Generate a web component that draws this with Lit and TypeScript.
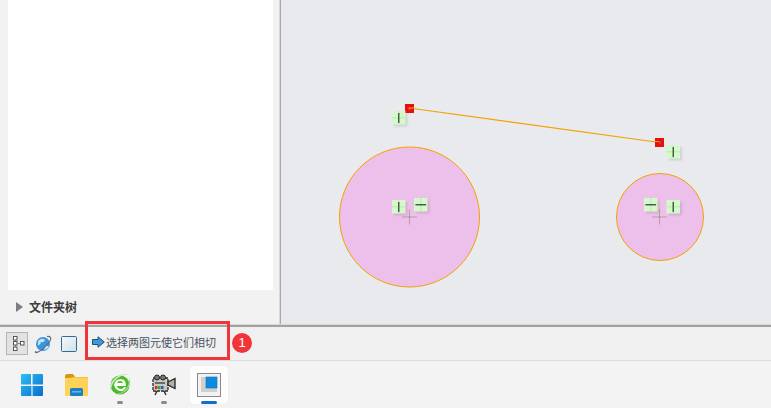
import { LitElement, html, css, svg } from "lit";
import { customElement } from "lit/decorators.js";

const tag = (x: number, y: number, vertical: boolean) => svg`
  <g transform="translate(${x} ${y})">
    <rect x="2" y="2" width="13.5" height="13.5" fill="#000" opacity=".1" filter="url(#soft)"/>
    <rect width="13.5" height="13.5" fill="#d4f9ca"/>
    <path d="M6.75 0v13.5M0 6.75h13.5" stroke="#c6ecbd" stroke-width="1.4"/>
    ${vertical
      ? svg`<path d="M6.75 2v10" stroke="#3d4a3e" stroke-width="1.3"/>`
      : svg`<path d="M1.500 6.75h10.500" stroke="#3d4a3e" stroke-width="1.3"/>`}
  </g>`;

const cross = (x: number, y: number) => svg`
  <path d="M${x} ${y - 7.5}v15M${x - 7.5} ${y}h15" stroke="#c59a9c" stroke-width="1"/>
  <rect x="${x - 1}" y="${y - 1}" width="2" height="2" fill="#8fa5c8"/>`;

@customElement("app-root")
export class AppRoot extends LitElement {
  static styles = css`
    :host {
      display: block;
      position: relative;
      width: 771px;
      height: 408px;
      overflow: hidden;
      background: #f3f3f3;
      font-family: "Noto Sans CJK SC", "Noto Sans", sans-serif;
    }
    .main {
      display: flex;
      height: 324px;
    }
    .side {
      width: 279px;
      flex: none;
      display: flex;
      flex-direction: column;
      padding-left: 8px;
      box-sizing: border-box;
      background: #f2f2f2;
    }
    .tree {
      width: 265px;
      height: 290px;
      flex: none;
      background: #fff;
    }
    .folder {
      display: flex;
      align-items: center;
      gap: 6px;
      height: 34px;
      padding-left: 8px;
      font-size: 12px;
      font-weight: 700;
      line-height: 16px;
      color: #3c3c3c;
    }
    .tri {
      width: 0;
      height: 0;
      border-left: 7px solid #7d7d7d;
      border-top: 5px solid transparent;
      border-bottom: 5px solid transparent;
    }
    .vline {
      flex: none;
      width: 1px;
      background: #a9a9a9;
      border-left: 1px solid #d8d8d8;
    }
    .canvas {
      flex: 1;
      background: #e8eaee;
    }
    .canvas svg { display: block; }
    .hline {
      height: 3px;
      background: linear-gradient(#d8d8d8 0 1px, #a2a2a2 1px);
    }
    .status {
      height: 33px;
      display: flex;
      align-items: center;
      padding-left: 6px;
      background: #f0f0f0;
      border-bottom: 1px solid #dcdcdc;
    }
    .tool {
      width: 22px;
      height: 23px;
      box-sizing: border-box;
      display: flex;
      align-items: center;
      justify-content: center;
      flex: none;
    }
    .tool.on {
      padding-left: 4px;
      background: #e2e2e2;
      border: 1px solid #b4b4b4;
    }
    .tools {
      display: flex;
      gap: 4px;
    }
    .sep {
      width: 1px;
      height: 24px;
      margin-left: 7px;
      background: #a8a8a8;
    }
    .msg {
      display: flex;
      align-items: center;
      gap: 1px;
      margin: 0 0 3px 4px;
      font-size: 11px;
      line-height: 14px;
      color: #47525e;
    }
    .taskbar {
      height: 47px;
      display: flex;
      align-items: center;
      padding-left: 12px;
      gap: 4px;
      background: #f3f3f3;
    }
    .app {
      position: relative;
      width: 40px;
      height: 40px;
      display: flex;
      align-items: center;
      justify-content: center;
      flex: none;
    }
    .app.active {
      width: 38px;
      height: 38px;
      margin-left: 2px;
      background: #fdfdfd;
      border-radius: 4px;
      box-shadow: 0 0 1px #d0d0d0;
    }
    .dot {
      position: absolute;
      left: 50%;
      bottom: 1px;
      width: 6px;
      height: 3px;
      margin-left: -3px;
      border-radius: 2px;
      background: #8a8a8a;
    }
    .bar {
      position: absolute;
      left: 11px;
      bottom: 0;
      width: 16px;
      height: 3px;
      border-radius: 2px;
      background: #0f6fd0;
    }
    .note {
      position: absolute;
      left: 85px;
      top: 321px;
      width: 145px;
      height: 39px;
      box-sizing: border-box;
      border: 3px solid #f0353a;
    }
    .badge {
      position: absolute;
      left: 232px;
      top: 333px;
      width: 20px;
      height: 20px;
      border-radius: 50%;
      background: #f0353a;
      color: #fff;
      font: 400 13px/20px "Liberation Sans", sans-serif;
      text-align: center;
    }
  `;

  render() {
    return html`
      <div class="main">
        <div class="side">
          <div class="tree"></div>
          <div class="folder"><span class="tri"></span><span>文件夹树</span></div>
        </div>
        <div class="vline"></div>
        <div class="canvas">
          <svg width="490" height="324" viewBox="281 0 490 324">
            <defs><filter id="soft"><feGaussianBlur stdDeviation="1"/></filter></defs>
            <circle cx="409.5" cy="217" r="70" fill="#ecc0ea" stroke="#f5a000" stroke-width="1"/>
            <circle cx="660" cy="217" r="43.5" fill="#ecc0ea" stroke="#f5a000" stroke-width="1"/>
            <path d="M409 108 659.5 142.500" stroke="#f5a000" stroke-width="1.1"/>
            <rect x="405" y="104" width="9" height="9" fill="#ee0d0d"/>
            <rect x="655" y="138" width="9" height="9" fill="#ee0d0d"/>
            <path d="M409 108H414M655 141.500H659" stroke="#f5a000" stroke-width="1.1"/>
            <rect x="408.500" y="107.500" width="2" height="2" fill="#8a9a60"/>
            <rect x="659" y="141.500" width="2" height="2" fill="#8a6a60"/>
            ${cross(409.5, 217)} ${cross(659.5, 217)}
            ${tag(392, 111, true)} ${tag(666.5, 145, true)}
            ${tag(392, 200, true)} ${tag(414, 198, false)}
            ${tag(644, 198, false)} ${tag(666.5, 200, true)}
          </svg>
        </div>
      </div>
      <div class="hline"></div>
      <div class="status">
        <div class="tools">
          <span class="tool on">
            <svg width="12" height="15" viewBox="0 0 12 15" fill="#fff" stroke="#555">
              <path d="M2.500 3v9M4.500 7.500h3" fill="none" stroke="#888"/>
              <rect x=".5" y=".5" width="3.500" height="3.500"/><rect x=".5" y="5.500" width="3.500" height="3.500"/>
              <rect x=".5" y="11" width="3.500" height="3.500"/><rect x="7.500" y="5.500" width="3.500" height="3.500"/>
            </svg>
          </span>
          <span class="tool">
            <svg width="20" height="20" viewBox="0 0 20 20">
              <circle cx="10" cy="10" r="7" fill="#3d94d8"/>
              <path d="M5 7q4-4 7-1-1 3-4 2-1 4-3 3zM12 12q3-1 4 1-2 3-5 3z" fill="#bfe3f7"/>
              <path d="M3 17Q1 20 6 17.500T17 7q2.500-5-3-4.500" fill="none" stroke="#5c6f85" stroke-width="1.200"/>
            </svg>
          </span>
          <span class="tool">
            <svg width="18" height="18" viewBox="0 0 18 18">
              <defs><linearGradient id="sq" x1="0" y1="0" x2="1" y2="1"><stop offset="0" stop-color="#f6f9fb"/><stop offset="1" stop-color="#cfdfe9"/></linearGradient></defs>
              <rect x="1.500" y="1.500" width="15" height="15" rx="1" fill="url(#sq)" stroke="#2b6f96"/>
            </svg>
          </span>
        </div>
        <div class="sep"></div>
        <div class="msg">
          <svg width="13" height="12" viewBox="0 0 13 12">
            <path d="M.5 3.500H6V.8L12.300 6 6 11.200V8.500H.5z" fill="#3c9ad6" stroke="#1f4f70"/>
          </svg>
          <span>选择两图元使它们相切</span>
        </div>
      </div>
      <div class="taskbar">
        <span class="app">
          <svg width="24" height="24" viewBox="0 0 24 24">
            <defs><linearGradient id="win" x1="0" y1="0" x2="1" y2="1"><stop offset="0" stop-color="#2cc0f5"/><stop offset="1" stop-color="#0a6cd0"/></linearGradient></defs>
            <path d="M1 2q0-1 1-1h9v10.400H1zM12.600 1H22q1 0 1 1v9.400H12.600zM1 13h10.400v10H2q-1 0-1-1zM12.600 13H23v9q0 1-1 1h-9.400z" fill="url(#win)"/>
          </svg>
        </span>
        <span class="app">
          <svg width="25" height="24" viewBox="0 0 25 24">
            <path d="M1 3q0-2 2-2h6l2 3h11q2 0 2 2v3H1z" fill="#d9960f"/>
            <path d="M1 5h23v17q0 1-1 1H2q-1 0-1-1z" fill="#fdd257"/>
            <path d="M5 5H24V4H9z" fill="#f6c03c"/>
            <rect x="6" y="15" width="13" height="8" rx="1.500" fill="#1e7fc4"/>
            <rect x="8" y="18" width="9" height="1.500" fill="#63b6e6"/>
          </svg>
        </span>
        <span class="app">
          <svg width="24" height="26" viewBox="0 0 24 26">
            <circle cx="12" cy="13" r="9.500" fill="#4cb82c"/>
            <path d="M3 20Q0 12 7 6q8-6 14-3-6-1-11 3-7 5-7 14z" fill="#c4e8b4"/>
            <path d="M21 5q3 7-2 13-5 5-13 4 7 0 11-4 5-5 4-13z" fill="#a8dc94"/>
            <path d="M6 13q1-6 7-6 5 0 5 7H9q1 3 4 3 2 0 3-2h2q-2 5-6 4-5-1-6-6zM9 11h6q-1-2-3-2-2 0-3 2z" fill="#f4fbef"/>
          </svg>
          <span class="dot"></span>
        </span>
        <span class="app">
          <svg width="25" height="22" viewBox="0 0 25 22">
            <rect x="1" y="4" width="15" height="13" fill="#c9c9c2" stroke="#2a2a2a" stroke-width="1.300" stroke-dasharray="3 1"/>
            <circle cx="5" cy="3.500" r="2.500" fill="#777" stroke="#222"/><circle cx="11" cy="3.500" r="2.500" fill="#777" stroke="#222"/>
            <path d="M16 8l7-3.500v10L16 11z" fill="#a9b5a5" stroke="#222" stroke-width="1.300"/>
            <rect x="3" y="8" width="10" height="2" fill="#6b6b6b"/>
            <rect x="3" y="12" width="2.500" height="3" fill="#d23"/><rect x="6" y="12" width="2.500" height="3" fill="#3a3"/><rect x="9" y="12" width="2.500" height="3" fill="#35c"/>
            <path d="M5 17l-2 4M12 17l2 4" stroke="#222" stroke-width="1.300"/>
          </svg>
          <span class="dot"></span>
        </span>
        <span class="app active">
          <svg width="24" height="24" viewBox="0 0 24 24">
            <rect x=".5" y=".5" width="23" height="23" fill="#f2f2f2" stroke="#8a8a8a"/>
            <rect x="4" y="4" width="16" height="15" fill="#cfcfcf"/>
            <rect x="9" y="4" width="11" height="11" fill="#0d8be0" stroke="#0a6fb5" stroke-width=".6"/>
          </svg>
          <span class="bar"></span>
        </span>
      </div>
      <div class="note"></div>
      <div class="badge">1</div>
    `;
  }
}
